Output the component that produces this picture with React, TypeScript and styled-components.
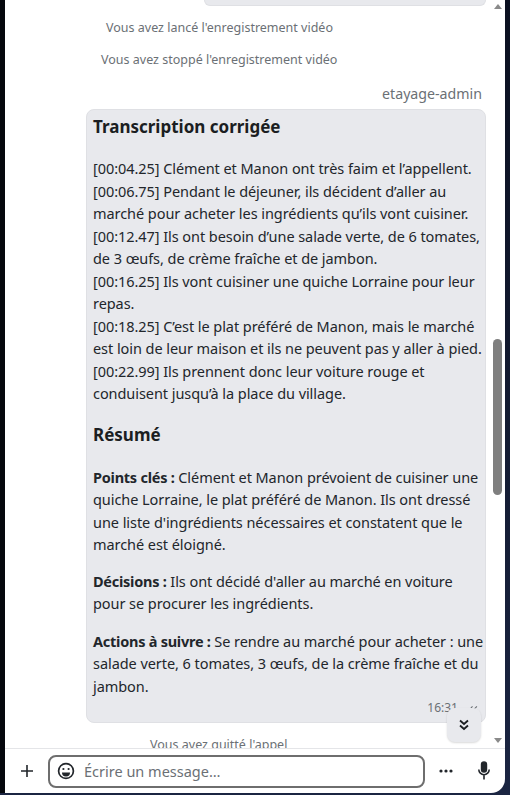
import React from "react";
import styled, { createGlobalStyle } from "styled-components";

const Global = createGlobalStyle`
  html, body { margin: 0; padding: 0; height: 100%; background: #0b1020; }
  #root { height: 100%; }
  * { box-sizing: border-box; }
`;
const Frame = styled.div`
  width: 510px; height: 795px; background: linear-gradient(180deg, #0b1020, #1b2542); padding: 0 5px 2px 5px;
  font-family: "Noto Sans", sans-serif; font-size: 14.5px; line-height: 22.5px; color: #22262b;
`;
const Panel = styled.main`
  height: 793px; background: #fff; border-bottom-right-radius: 14px; overflow: hidden;
  display: flex; flex-direction: column; box-shadow: -5px 0 0 #05070d;
`;
const ScrollRow = styled.div`
  height: 749px; flex: none; display: flex; border-bottom: 1px solid #e4e5e8; position: relative;
`;
const Messages = styled.div`
  flex: 1; min-width: 0; overflow: hidden; padding-right: 4px; display: flex; flex-direction: column;
`;
const TopStub = styled.div`
  height: 6px; flex: none; width: 282px; align-self: flex-end;
  background: #e8e9ed; border: 1px solid #dfe0e4; border-top: 0; border-radius: 0 0 8px 8px;
`;
const SystemLine = styled.div<{ $indent: number; $top: number }>`
  margin-top: ${p => p.$top}px; padding-left: ${p => p.$indent}px; height: 22px;
  font-size: 12.5px; line-height: 22px; color: #6b7075; white-space: nowrap; flex: none;
`;
const Author = styled.div`
  margin-top: 12px; flex: none; text-align: right; padding-right: 4px; font-size: 14.2px; line-height: 22px; color: #6b7075;
`;
const Bubble = styled.article`
  flex: none; margin-left: 81px; margin-top: 4px; width: 400px; height: 614px; padding: 3px 6px 0;
  background: #e8e9ed; border: 1px solid #dfe0e4; border-radius: 8px; display: flex; flex-direction: column;
`;
const Heading = styled.h2<{ $top: number }>`
  margin: ${p => p.$top}px 0 0; font-size: 17px; line-height: 27px; font-weight: 700; color: #1b1e22; white-space: nowrap;
`;
const Para = styled.p<{ $top: number }>`
  margin: ${p => p.$top}px 0 0; white-space: nowrap; letter-spacing: -0.06px;
  b { letter-spacing: -0.25px; }
`;
const Meta = styled.div`
  margin-top: 0; display: flex; justify-content: flex-end; align-items: center; gap: 9px; padding-right: 1px;
  font-size: 12px; line-height: 22px; color: #6b7075;
`;
const Checks = styled.svg`width: 11px; height: 11px;`;
const Jump = styled.button`
  position: absolute; left: 442px; top: 708px; width: 34px; height: 34px; padding: 0; border: 0;
  border-radius: 8px; background: #e8e9ed; box-shadow: 0 1px 2px rgba(0,0,0,.15);
  display: flex; align-items: center; justify-content: center; color: #1b1e22;
`;
const ScrollTrack = styled.div`
  width: 15px; flex: none; display: flex; flex-direction: column; align-items: center; padding-top: 4px;
`;
const ArrowUp = styled.div`
  width: 0; height: 0; border-left: 4.5px solid transparent; border-right: 4.5px solid transparent; border-bottom: 5px solid #8a8a8a;
`;
const ArrowDown = styled.div`
  width: 0; height: 0; margin-top: 243px; border-left: 4.5px solid transparent; border-right: 4.5px solid transparent; border-top: 5px solid #8a8a8a;
`;
const Thumb = styled.div`
  width: 9px; height: 156px; margin-top: 330px; border-radius: 5px; background: #7f7f7f;
`;
const Composer = styled.footer`
  flex: 1; display: flex; align-items: center; padding: 0 8px 0 9px;
`;
const IconButton = styled.button`
  width: 26px; height: 26px; flex: none; padding: 0; border: 0; background: none; color: #22262b;
  display: flex; align-items: center; justify-content: center;
`;
const InputBox = styled.div`
  margin-left: 8px; flex: none; width: 377px; height: 33px; border: 2px solid #6e6e6e; border-radius: 8px;
  display: flex; align-items: center; gap: 9px; padding-left: 7px; color: #6b7075; font-size: 14.5px;
`;
const Smile = styled.svg`width: 18px; height: 18px; flex: none; color: #22262b;`;
const Right = styled.div`
  display: flex; gap: 12px; margin-left: 8px; align-items: center;
`;

export default function App() {
  return (
    <Frame>
      <Global />
      <Panel>
        <ScrollRow>
          <Messages>
            <TopStub />
            <SystemLine $indent={101} $top={11}>Vous avez lancé l'enregistrement vidéo</SystemLine>
            <SystemLine $indent={96} $top={10}>Vous avez stoppé l'enregistrement vidéo</SystemLine>
            <Author>etayage-admin</Author>
            <Bubble>
              <Heading $top={0}>Transcription corrigée</Heading>
              <Para $top={17}>
                [00:04.25] Clément et Manon ont très faim et l’appellent.<br />
                [00:06.75] Pendant le déjeuner, ils décident d’aller au<br />
                marché pour acheter les ingrédients qu’ils vont cuisiner.<br />
                [00:12.47] Ils ont besoin d’une salade verte, de 6 tomates,<br />
                de 3 œufs, de crème fraîche et de jambon.<br />
                [00:16.25] Ils vont cuisiner une quiche Lorraine pour leur<br />
                repas.<br />
                [00:18.25] C’est le plat préféré de Manon, mais le marché<br />
                est loin de leur maison et ils ne peuvent pas y aller à pied.<br />
                [00:22.99] Ils prennent donc leur voiture rouge et<br />
                conduisent jusqu’à la place du village.
              </Para>
              <Heading $top={16}>Résumé</Heading>
              <Para $top={18}>
                <b>Points clés :</b> Clément et Manon prévoient de cuisiner une<br />
                quiche Lorraine, le plat préféré de Manon. Ils ont dressé<br />
                une liste d'ingrédients nécessaires et constatent que le<br />
                marché est éloigné.
              </Para>
              <Para $top={14}>
                <b>Décisions :</b> Ils ont décidé d'aller au marché en voiture<br />
                pour se procurer les ingrédients.
              </Para>
              <Para $top={15}>
                <b>Actions à suivre :</b> Se rendre au marché pour acheter : une<br />
                salade verte, 6 tomates, 3 œufs, de la crème fraîche et du<br />
                jambon.
              </Para>
              <Meta>
                <span>16:31</span>
                <Checks viewBox="0 0 10 10" fill="none" stroke="#6b7075" strokeWidth="1">
                  <path d="M1 7.5L5 3M4 8L9 3" />
                </Checks>
              </Meta>
            </Bubble>
            <SystemLine $indent={145} $top={11}>Vous avez quitté l'appel</SystemLine>
          </Messages>
          <ScrollTrack>
            <ArrowUp />
            <Thumb />
            <ArrowDown />
          </ScrollTrack>
          <Jump aria-label="Aller en bas">
            <svg width="14" height="14" viewBox="0 0 14 14" fill="none" stroke="currentColor" strokeWidth="1.8">
              <path d="M3 2.5l4 3.5 4-3.5M3 7.5l4 3.5 4-3.5" />
            </svg>
          </Jump>
        </ScrollRow>
        <Composer>
          <IconButton aria-label="Ajouter">
            <svg width="14" height="14" viewBox="0 0 14 14" stroke="currentColor" strokeWidth="1.6">
              <path d="M7 1v12M1 7h12" />
            </svg>
          </IconButton>
          <InputBox>
            <Smile viewBox="0 0 18 18" fill="none" stroke="currentColor" strokeWidth="1.7">
              <circle cx="9" cy="9" r="7.4" />
              <circle cx="6.4" cy="7" r="1.1" fill="currentColor" stroke="none" />
              <circle cx="11.6" cy="7" r="1.1" fill="currentColor" stroke="none" />
              <path d="M5 10.5h8a4 4 0 0 1-8 0z" fill="currentColor" stroke="none" />
            </Smile>
            <span>Écrire un message…</span>
          </InputBox>
          <Right>
            <IconButton aria-label="Plus">
              <svg width="14" height="4" viewBox="0 0 14 4" fill="currentColor">
                <circle cx="2" cy="2" r="1.6" /><circle cx="7" cy="2" r="1.6" /><circle cx="12" cy="2" r="1.6" />
              </svg>
            </IconButton>
            <IconButton aria-label="Micro">
              <svg width="14" height="20" viewBox="0 0 14 20" fill="none" stroke="currentColor" strokeWidth="1.6">
                <rect x="4.6" y="1" width="4.8" height="10" rx="2.4" fill="currentColor" />
                <path d="M1.8 8.5a5.2 5.2 0 0 0 10.4 0M7 14v4.5" />
              </svg>
            </IconButton>
          </Right>
        </Composer>
      </Panel>
    </Frame>
  );
}
